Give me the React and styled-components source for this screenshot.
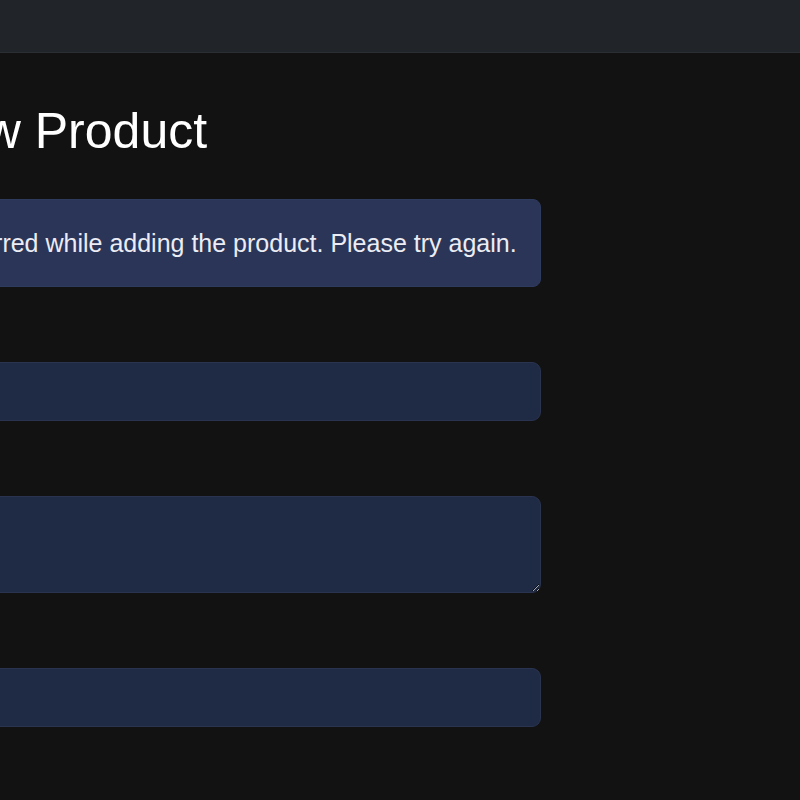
import React from "react";
import styled, { createGlobalStyle } from "styled-components";

const GlobalStyle = createGlobalStyle`
    html, body {
        margin: 0;
        padding: 0;
        background: #121212;
        overflow: hidden;
    }
    body {
        font-family: "Liberation Sans", Arial, sans-serif;
        color: #f1f1f1;
    }
`;

const Header = styled.header`
    height: 52px;
    background: #212529;
    border-bottom: 1px solid #2b2f34;
`;

const Main = styled.main`
    width: 723px;
    margin-left: -182px;
    padding-top: 48px;
`;

const Title = styled.h1`
    margin: 0 0 38px;
    font-size: 50px;
    font-weight: 400;
    line-height: 1.2;
    color: #ffffff;
`;

const Alert = styled.div`
    margin-bottom: 24px;
    padding: 25px 20px 25px 25px;
    background: #2a3558;
    border: 1px solid #2e3a5e;
    border-radius: 8px;
    font-size: 25px;
    line-height: 36px;
    white-space: nowrap;
    color: #ececf4;
`;

const Group = styled.div`
    margin-bottom: 24px;
`;

const Label = styled.label`
    display: block;
    margin-bottom: 15px;
    font-size: 24px;
    line-height: 36px;
    color: #e6e6e6;
`;

const Field = styled.input`
    display: block;
    box-sizing: border-box;
    width: 100%;
    height: 59px;
    padding: 0 18px;
    background: #1f2a45;
    border: 1px solid #2a3450;
    border-radius: 9px;
    font: inherit;
    font-size: 24px;
    color: #f1f1f1;
    outline: none;
`;

const Area = styled.textarea`
    display: block;
    box-sizing: border-box;
    width: 100%;
    height: 97px;
    padding: 9px 18px;
    background: #1f2a45;
    border: 1px solid #2a3450;
    border-radius: 9px;
    font: inherit;
    font-size: 24px;
    color: #f1f1f1;
    outline: none;
    color-scheme: dark;
`;

export default function App() {
    return (
        <>
            <GlobalStyle />
            <Header />
            <Main>
                <Title>Add New Product</Title>
                <Alert>An error occurred while adding the product. Please try again.</Alert>
                <Group>
                    <Label>Name</Label>
                    <Field type="text" />
                </Group>
                <Group>
                    <Label>Description</Label>
                    <Area />
                </Group>
                <Group>
                    <Label>Price</Label>
                    <Field type="number" />
                </Group>
            </Main>
        </>
    );
}
